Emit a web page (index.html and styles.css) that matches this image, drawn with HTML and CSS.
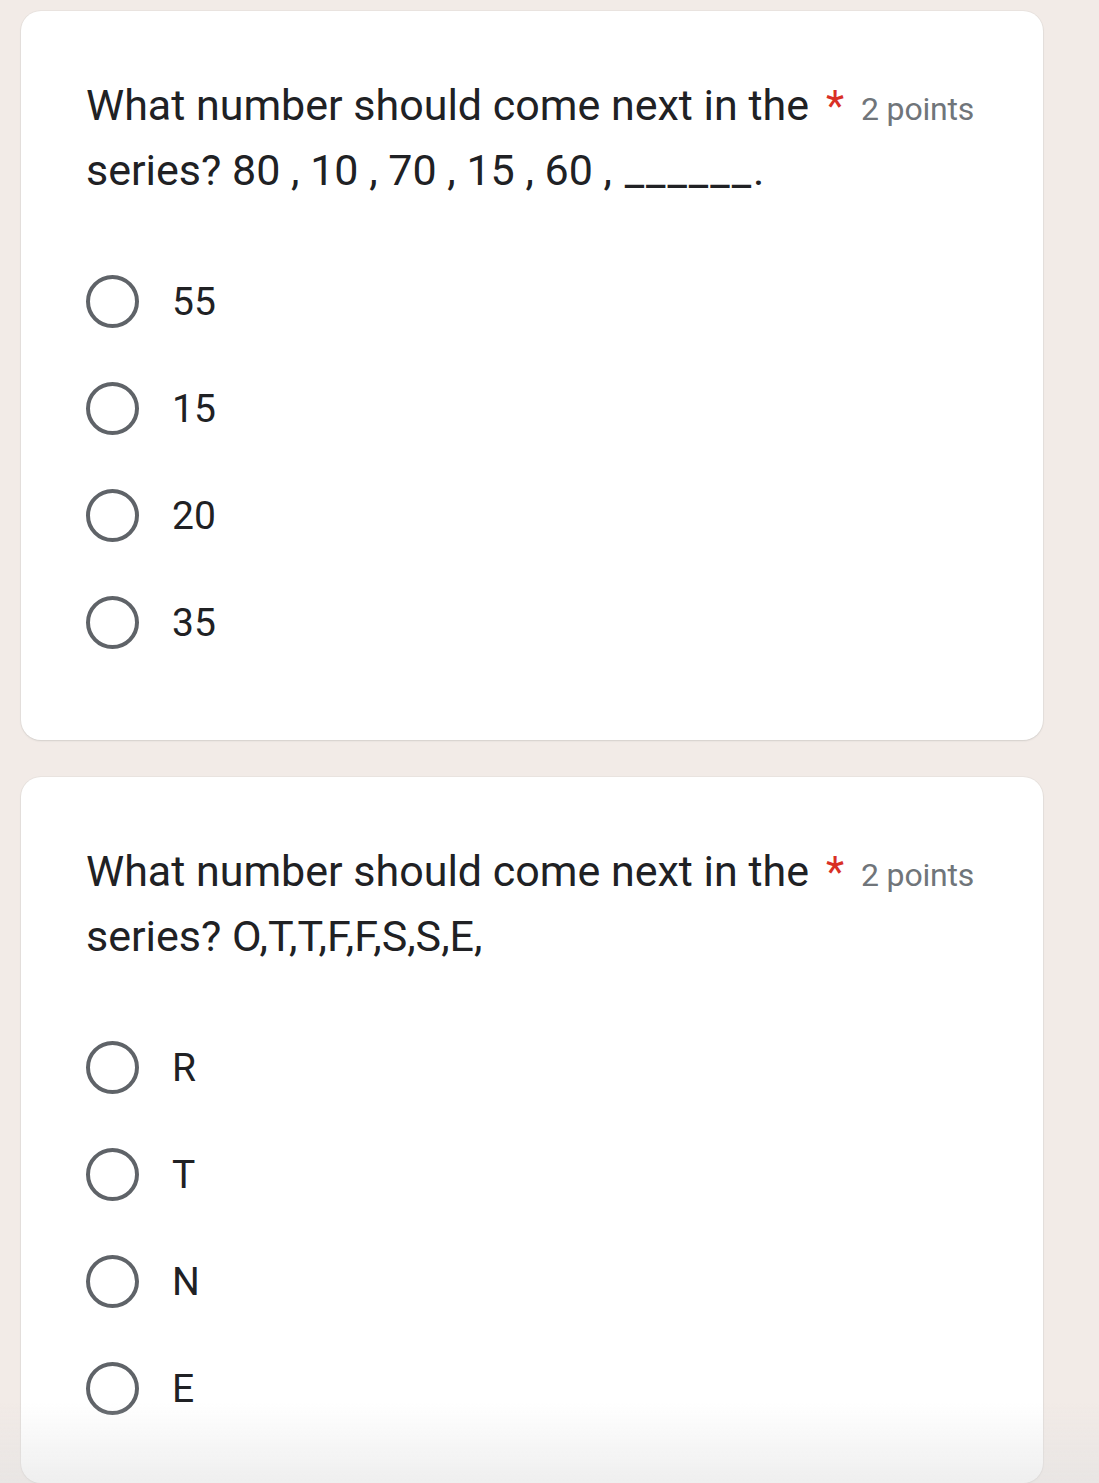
FILE: index.html
```html
<!DOCTYPE html>
<html>
<head>
<meta charset="utf-8">
<link rel="stylesheet" href="styles.css">
</head>
<body>
<div class="page">
  <section class="card card-first">
    <div class="q-head">
      <div class="q-title">What number should come next in the series? 80 , 10 , 70 , 15 , 60 , <span class="blank">______.</span></div>
      <div class="q-meta"><span class="req">*</span><span class="pts">2 points</span></div>
    </div>
    <div class="options">
      <label class="opt"><span class="radio"></span><span class="opt-text">55</span></label>
      <label class="opt"><span class="radio"></span><span class="opt-text">15</span></label>
      <label class="opt"><span class="radio"></span><span class="opt-text">20</span></label>
      <label class="opt"><span class="radio"></span><span class="opt-text">35</span></label>
    </div>
  </section>
  <section class="card card-second">
    <div class="q-head">
      <div class="q-title">What number should come next in the series? O,T,T,F,F,S,S,E,</div>
      <div class="q-meta"><span class="req">*</span><span class="pts">2 points</span></div>
    </div>
    <div class="options">
      <label class="opt"><span class="radio"></span><span class="opt-text">R</span></label>
      <label class="opt"><span class="radio"></span><span class="opt-text">T</span></label>
      <label class="opt"><span class="radio"></span><span class="opt-text">N</span></label>
      <label class="opt"><span class="radio"></span><span class="opt-text">E</span></label>
    </div>
  </section>
</div>
<div class="bottom-fade"></div>
</body>
</html>
```
FILE: styles.css
```css
html, body {
  margin: 0;
  padding: 0;
}
body {
  background: #f2ebe7;
  font-family: Roboto, "Liberation Sans", Arial, sans-serif;
  color: #202124;
  height: 1483px;
  overflow: hidden;
}
.page {
  padding: 11px 56px 0 21px;
  display: flex;
  flex-direction: column;
  gap: 37px;
}
.card {
  background: #ffffff;
  border-radius: 20px;
  box-shadow: 0 1px 2px rgba(60, 64, 67, 0.12), 0 0 0 1px rgba(60,64,67,0.04);
  padding: 62px 64px 0 65px;
}
.card-first {
  height: 667px;
}
.card-second {
  height: 644px;
}
.q-head {
  display: flex;
  align-items: flex-start;
}
.q-title {
  width: 730px;
  font-size: 43px;
  line-height: 65px;
  color: #202124;
}
.blank {
  letter-spacing: 2px;
  margin-left: 2px;
}
.q-meta {
  display: flex;
  align-items: baseline;
  gap: 17px;
  line-height: 65px;
  margin-left: 10px;
}
.req {
  color: #d93025;
  font-size: 42px;
}
.pts {
  color: #70757a;
  font-size: 32px;
  letter-spacing: -0.2px;
}
.options {
  margin-top: 72px;
  display: flex;
  flex-direction: column;
  gap: 54px;
}
.opt {
  display: flex;
  align-items: center;
  gap: 33px;
  height: 53px;
}
.radio {
  width: 45px;
  height: 45px;
  border: 4px solid #5f6368;
  border-radius: 50%;
  flex: none;
}
.opt-text {
  font-size: 39px;
  color: #202124;
}
.bottom-fade {
  position: fixed;
  left: 0;
  right: 0;
  bottom: 0;
  height: 80px;
  background: linear-gradient(to bottom, rgba(230, 230, 230, 0), rgba(225, 225, 225, 0.55));
  pointer-events: none;
}
```
